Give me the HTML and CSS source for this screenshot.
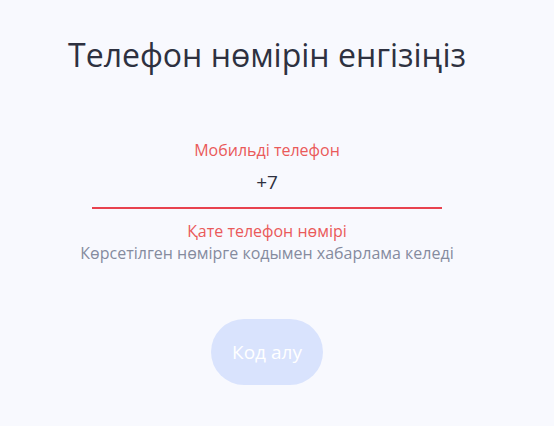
FILE: index.html
```html
<!DOCTYPE html>
<html lang="kk">
<head>
  <meta charset="UTF-8" />
  <meta name="viewport" content="width=device-width, initial-scale=1.0"/>
  <title>Телефон нөмірі</title>
  <link rel="stylesheet" href="styles.css">
</head>
<body>
  <main class="auth">
    <h1 class="auth-title">Телефон нөмірін енгізіңіз</h1>

    <div class="field">
      <label class="field-label" for="phone">Мобильді телефон</label>
      <input class="field-input" id="phone" type="tel" value="+7" />
      <div class="field-error">Қате телефон нөмірі</div>
      <div class="field-hint">Көрсетілген нөмірге кодымен хабарлама келеді</div>
    </div>

    <button class="submit-btn" disabled>Код алу</button>
  </main>
</body>
</html>
```

FILE: styles.css
```css
body {
  margin: 0;
  background-color: #f8f9fe;
  font-family: "Open Sans", "Noto Sans", sans-serif;
  height: 100vh;
}
.auth {
  width: 534px;
  display: flex;
  flex-direction: column;
  align-items: center;
  padding-top: 33px;
}
.auth-title {
  margin: 0;
  font-size: 32px;
  font-weight: 400;
  color: #2e3140;
  line-height: 44px;
}
.field {
  margin-top: 62px;
  width: 350px;
  display: flex;
  flex-direction: column;
  align-items: center;
}
.field-label {
  font-size: 16px;
  color: #ea5a5a;
  line-height: 22px;
}
.field-input {
  width: 100%;
  box-sizing: border-box;
  border: none;
  border-bottom: 2px solid #e8424f;
  background: transparent;
  text-align: center;
  font-family: inherit;
  font-size: 19px;
  color: #2e3140;
  padding: 8px 0 12px;
  outline: none;
}
.field-error {
  margin-top: 11px;
  font-size: 16px;
  color: #ea5a5a;
  line-height: 22px;
}
.field-hint {
  font-size: 16px;
  color: #858b9e;
  line-height: 22px;
  white-space: nowrap;
}
.submit-btn {
  margin-top: 55px;
  width: 112px;
  height: 66px;
  border: none;
  border-radius: 33px;
  background-color: #d9e3fd;
  color: #fff;
  font-family: inherit;
  font-size: 19px;
}
```
